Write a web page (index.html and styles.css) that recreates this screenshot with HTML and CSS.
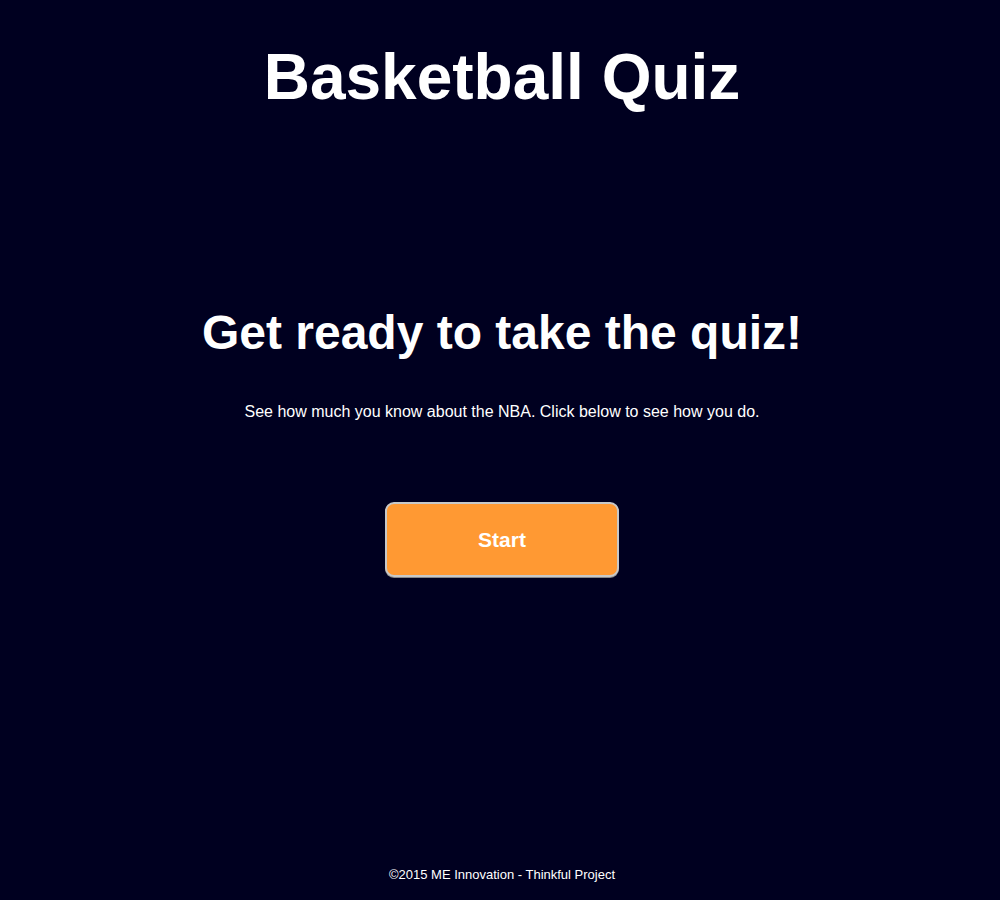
FILE: index.html
```html
<!DOCTYPE html>
<html>
<head>
<meta charset="utf-8">
<title>Basketball Quiz</title>
<link rel="stylesheet" href="styles.css">
</head>
<body>
<div class="page">
  <header class="header">
    <h1 class="title">Basketball Quiz</h1>
  </header>
  <main class="intro">
    <h2 class="heading">Get ready to take the quiz!</h2>
    <p class="lead">See how much you know about the NBA. Click below to see how you do.</p>
    <button class="start">Start</button>
  </main>
  <footer class="footer">©2015 ME Innovation - Thinkful Project</footer>
</div>
</body>
</html>
```
FILE: styles.css
```css
html, body {
  margin: 0;
  padding: 0;
  background: #000020;
}
.page {
  height: 900px;
  box-sizing: border-box;
  padding-left: 4px;
  display: flex;
  flex-direction: column;
  align-items: center;
  font-family: "Liberation Sans", Arial, sans-serif;
  color: #ffffff;
}
.header {
  padding-top: 40px;
}
.title {
  margin: 0;
  font-size: 64px;
  font-weight: bold;
  line-height: 74px;
}
.intro {
  display: flex;
  flex-direction: column;
  align-items: center;
  padding-top: 191px;
}
.heading {
  margin: 0;
  font-size: 48px;
  font-weight: bold;
  line-height: 56px;
}
.lead {
  margin: 41px 0 0;
  font-size: 16px;
  line-height: 20px;
}
.start {
  margin-top: 80px;
  width: 234px;
  height: 75px;
  background: #ff9933;
  border: 2px solid #c8c8c8;
  border-radius: 9px;
  box-shadow: 0 1px 0 #888;
  color: #ffffff;
  font-family: "Liberation Sans", Arial, sans-serif;
  font-size: 21px;
  font-weight: bold;
}
.footer {
  margin-top: auto;
  margin-bottom: 18px;
  font-size: 13px;
}
```
